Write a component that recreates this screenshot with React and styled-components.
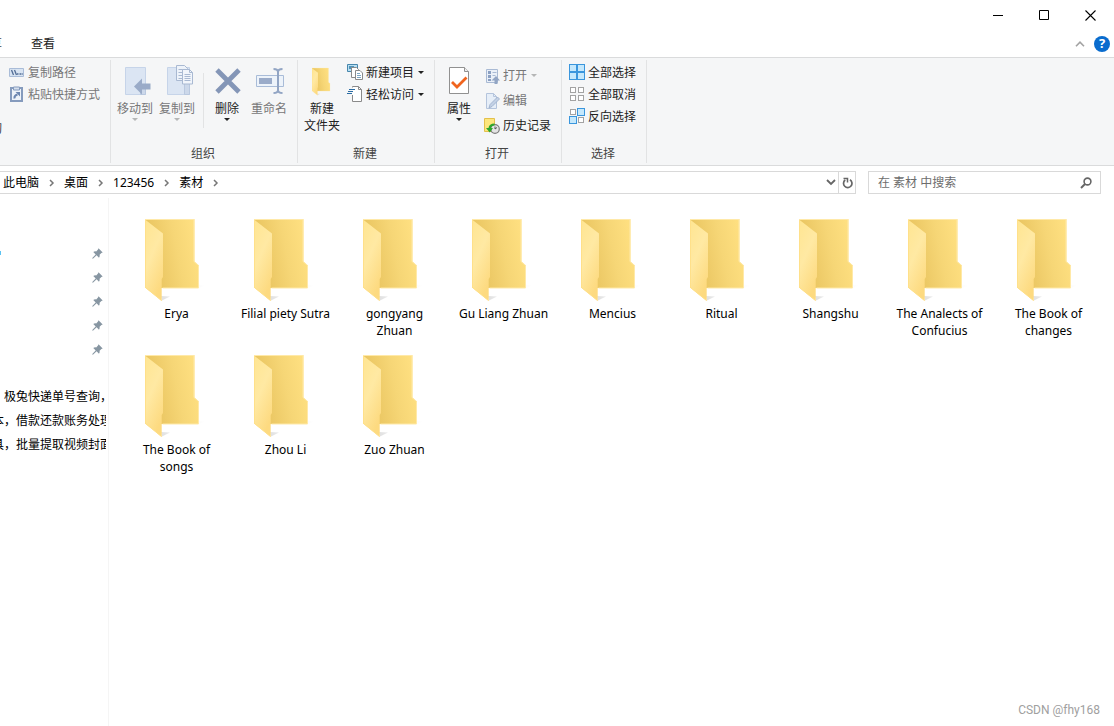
import React, { useState } from "react";
import styled, { createGlobalStyle } from "styled-components";

const folders = [
    "Erya",
    "Filial piety Sutra",
    "gongyang Zhuan",
    "Gu Liang Zhuan",
    "Mencius",
    "Ritual",
    "Shangshu",
    "The Analects of Confucius",
    "The Book of changes",
    "The Book of songs",
    "Zhou Li",
    "Zuo Zhuan",
];

const crumbs = ["此电脑", "桌面", "123456", "素材"];

const pinned = [1, 2, 3, 4, 5];

const recent = ["，极兔快递单号查询，", "本，借款还款账务处理", "具，批量提取视频封面"];

const App = () => {
    const [search, setSearch] = useState("");
    return (
        <>
            <GlobalStyle />
            <Window>
                <TitleBar>
                    <WindowButton aria-label="最小化">
                        <svg width="11" height="11"><path d="M0 5.5h10" stroke="#000" /></svg>
                    </WindowButton>
                    <WindowButton aria-label="最大化">
                        <svg width="11" height="11"><path d="M.5 .5h9v9h-9z" fill="none" stroke="#000" /></svg>
                    </WindowButton>
                    <WindowButton aria-label="关闭">
                        <svg width="11" height="11"><path d="M.5 .5l10 10M10.5 .5l-10 10" stroke="#000" strokeWidth="1.1" /></svg>
                    </WindowButton>
                </TitleBar>
                <TabBar>
                    <CutText $width={2}>共享</CutText>
                    <Tab>查看</Tab>
                    <TabTools>
                        <PlainButton aria-label="折叠功能区">
                            <svg width="10" height="6"><path d="M1 5.2l4-4 4 4" fill="none" stroke="#a3a3a3" strokeWidth="1.6" /></svg>
                        </PlainButton>
                        <HelpButton>?</HelpButton>
                    </TabTools>
                </TabBar>

                <Ribbon>
                    <Group $width={110}>
                        <Tools>
                            <ClipRail>
                                <CutText $width={2}>剪切</CutText>
                            </ClipRail>
                            <Column>
                                <Small icon={<CopyPathIcon />} text="复制路径" disabled />
                                <Small icon={<PasteLinkIcon />} text="粘贴快捷方式" disabled />
                            </Column>
                        </Tools>
                    </Group>
                    <Group $width={186}>
                        <Tools>
                            <Big icon={<MoveIcon />} text="移动到" caret disabled />
                            <Big icon={<CopyIcon />} text="复制到" caret disabled />
                            <Divider />
                            <Big icon={<DeleteIcon />} text="删除" caret />
                            <Big icon={<RenameIcon />} text="重命名" disabled />
                        </Tools>
                        <GroupName>组织</GroupName>
                    </Group>
                    <Group $width={136}>
                        <Tools>
                            <Big icon={<FolderIcon width="21" height="32" />} text={<>新建<br />文件夹</>} />
                            <Column>
                                <Small icon={<NewItemIcon />} text="新建项目" caret />
                                <Small icon={<AccessIcon />} text="轻松访问" caret />
                            </Column>
                        </Tools>
                        <GroupName>新建</GroupName>
                    </Group>
                    <Group $width={126}>
                        <Tools>
                            <Big icon={<PropertiesIcon />} text="属性" caret />
                            <Column $loose>
                                <Small icon={<OpenIcon />} text="打开" caret disabled />
                                <Small icon={<EditIcon />} text="编辑" disabled />
                                <Small icon={<HistoryIcon />} text="历史记录" />
                            </Column>
                        </Tools>
                        <GroupName>打开</GroupName>
                    </Group>
                    <Group $width={84}>
                        <Tools>
                            <Column>
                                <Small icon={<SquaresIcon on={[1, 1, 1, 1]} />} text="全部选择" />
                                <Small icon={<SquaresIcon on={[0, 0, 0, 0]} />} text="全部取消" />
                                <Small icon={<SquaresIcon on={[0, 1, 1, 0]} />} text="反向选择" />
                            </Column>
                        </Tools>
                        <GroupName>选择</GroupName>
                    </Group>
                </Ribbon>

                <AddressRow>
                    <Address>
                        {crumbs.map((name) => (
                            <React.Fragment key={name}>
                                <Crumb href="#">{name}</Crumb>
                                <CrumbArrow>
                                    <svg width="6" height="8"><path d="M1 1l3 3-3 3" fill="none" stroke="#777" strokeWidth="1.5" /></svg>
                                </CrumbArrow>
                            </React.Fragment>
                        ))}
                        <AddressTools>
                            <PlainButton aria-label="以前的位置">
                                <svg width="10" height="7"><path d="M1 1l4 4 4-4" fill="none" stroke="#666" strokeWidth="1.8" /></svg>
                            </PlainButton>
                            <Refresh aria-label="刷新">
                                <svg width="11" height="12">
                                    <path d="M8 2.8A4.200 4.200 0 1 1 3.200 3" fill="none" stroke="#666" strokeWidth="1.7" />
                                    <path d="M1.500 1.500h4v4" fill="none" stroke="#666" strokeWidth="1.5" />
                                </svg>
                            </Refresh>
                        </AddressTools>
                    </Address>
                    <SearchBox>
                        <input
                            aria-label="搜索"
                            placeholder="在 素材 中搜索"
                            value={search}
                            onChange={(e) => setSearch(e.target.value)}
                        />
                        <svg width="12" height="12">
                            <circle cx="7.5" cy="4.5" r="3.4" fill="none" stroke="#666" strokeWidth="1.6" />
                            <path d="M5 7L1 11" stroke="#666" strokeWidth="2" />
                        </svg>
                    </SearchBox>
                </AddressRow>

                <Body>
                    <Sidebar>
                        {pinned.map((id) => (
                            <PinRow key={id}>
                                {id === 1 && <CutMark />}
                                <PinIcon />
                            </PinRow>
                        ))}
                        <Recent>
                            {recent.map((name) => (
                                <RecentLink href="#" key={name}>{name}</RecentLink>
                            ))}
                        </Recent>
                    </Sidebar>
                    <Files>
                        {folders.map((name) => (
                            <File key={name}>
                                <FolderIcon width="63" height="84" />
                                <span>{name}</span>
                            </File>
                        ))}
                    </Files>
                </Body>
                <Watermark>CSDN @fhy168</Watermark>
            </Window>
        </>
    );
};

const Caret = () => (
    <svg className="caret" width="6" height="3"><path d="M0 0h6L3 3z" fill="currentColor" /></svg>
);

const Big = ({ icon, text, caret, disabled }) => (
    <BigButton disabled={disabled}>
        <BigIcon>{icon}</BigIcon>
        <span>{text}</span>
        {caret && <Caret />}
    </BigButton>
);

const Small = ({ icon, text, caret, disabled }) => (
    <SmallButton disabled={disabled}>
        {icon}
        <span>{text}</span>
        {caret && <Caret />}
    </SmallButton>
);

const FolderIcon = ({ width, height }) => (
    <svg width={width} height={height} viewBox="0 0 63 84" preserveAspectRatio="xMidYMax meet">
        <defs>
            <linearGradient id="back" x1="0.2" x2="1" y1="0.6" y2="0.4">
                <stop offset="0" stopColor="#ebc763" />
                <stop offset="0.5" stopColor="#f6d676" />
                <stop offset="1" stopColor="#ffe081" />
            </linearGradient>
            <linearGradient id="front" x1="0" x2="0.5" y1="0" y2="1">
                <stop offset="0" stopColor="#ffe591" />
                <stop offset="0.5" stopColor="#ffe9a3" />
                <stop offset="1" stopColor="#fdda80" />
            </linearGradient>
            <linearGradient id="shade" x1="0" x2="1">
                <stop offset="0" stopColor="#ccc" stopOpacity="0.6" />
                <stop offset="1" stopColor="#e4e4e4" stopOpacity="0" />
            </linearGradient>
        </defs>
        <path d="M53 65.500l8 1-7 2.5h-2zM16 77l9 .5-8 4z" fill="url(#shade)" />
        <path d="M0 0h49.500v42.500l4.500 4v22.500h-54z" fill="url(#back)" />
        <path d="M0 .5h49v42l4.500 4v22.500h-36" fill="none" stroke="#ffe9a8" />
        <path d="M0 .5l18 14v43.500l-1.300 2v22L0 68.500z" fill="url(#front)" />
        <path d="M.5 1v67.500l16 13" fill="none" stroke="#ffe08a" />
    </svg>
);

const CopyPathIcon = () => (
    <svg width="16" height="16">
        <path d="M.5 4.500h14v8h-14z" fill="#d8e4f2" stroke="#a9bcd8" />
        <path d="M2.500 6l2 5M5.500 6l2 5" stroke="#526d96" strokeWidth="1.3" />
        <path d="M8 10h1.500M10.500 10h1.500M12.500 10h1.200" stroke="#526d96" strokeWidth="1.5" />
    </svg>
);

const PasteLinkIcon = () => (
    <svg width="16" height="16">
        <path d="M2 2h11v13h-11z" fill="#eef3f9" stroke="#859bbd" strokeWidth="2" />
        <path d="M4.500 1h6v3h-6z" fill="#d5dfed" stroke="#859bbd" />
        <path d="M5.500 12.500q-.5-3 3-4" fill="none" stroke="#6c86b0" strokeWidth="2" />
        <path d="M6.500 6h4.500v4.500z" fill="#6c86b0" />
    </svg>
);

const MoveIcon = () => (
    <svg width="32" height="32" viewBox="-5 -1 32 32">
        <path d="M1.500 2.500h20v27h-20z" fill="#dbe5f3" stroke="#c6d4e9" />
        <path d="M16.500 22v7.500h5V22" fill="#ccd8ea" stroke="#b9c8df" />
        <path d="M10 21.500l8-8v5H26.500v6h-8.500v5z" fill="#9aabc8" />
    </svg>
);

const CopyIcon = () => (
    <svg width="32" height="32" viewBox="-5 -1 32 32">
        <path d="M1.500 2.500h22v27h-22z" fill="#dbe5f3" stroke="#c6d4e9" />
        <path d="M18.500 19v10.500h5V19" fill="#ccd8ea" stroke="#b9c8df" />
        <path d="M10.500 .5h8l3 3v12h-11z" fill="#eef3fa" stroke="#a9b9d2" />
        <path d="M12.500 4.500h5M12.500 7.500h5M12.500 10.500h5M12.500 13.500h5" stroke="#a9b9d2" />
        <path d="M16.500 4.500h7l3 3v11.500h-10z" fill="#f1f5fb" stroke="#a9b9d2" />
        <path d="M23.500 4.500v3h3M18.500 9.500h6M18.500 11.500h6M18.500 13.500h6M18.500 15.500h6" fill="none" stroke="#a9b9d2" />
    </svg>
);

const DeleteIcon = () => (
    <svg width="30" height="30" viewBox="-2 -2 30 30">
        <path d="M3 3l22 22M25 3L3 25" stroke="#8496b7" strokeWidth="4.800" />
    </svg>
);

const RenameIcon = () => (
    <svg width="30" height="30" viewBox="-2 -2 30 30">
        <path d="M.5 8.500h27v11h-27z" fill="#edf3fa" stroke="#a9bcd8" />
        <path d="M3 11h13v6H3z" fill="#9aabc9" />
        <path d="M17.500 2q4.500 0 4.500 3v18q0 3-4.500 3M26.500 2q-4.500 0-4.500 3v18q0 3 4.500 3" fill="none" stroke="#92a5c4" strokeWidth="2" />
    </svg>
);

const NewItemIcon = () => (
    <svg width="16" height="16">
        <path d="M.5 .5h10v7h-10z" fill="#b9dff2" stroke="#4787ad" />
        <path d="M2 2h5v3H2z" fill="#4f93b8" />
        <path d="M4.500 3.500h5l2 2v8h-7z" fill="#fff" stroke="#8a8a8a" />
        <path d="M8.500 6.500h4.500l2.500 2.500v6.500h-7z" fill="#fff" stroke="#8a8a8a" />
        <path d="M10 9.500h3M10 11.500h4M10 13.500h4" stroke="#7ca6c4" />
    </svg>
);

const AccessIcon = () => (
    <svg width="16" height="16">
        <path d="M5.500 .5h6l3 3v12h-9z" fill="#fff" />
        <path d="M5.500 9v6.500h9v-12l-3-3h-6v1M11.500 .5v3h3" fill="none" stroke="#8a8a8a" />
        <path d="M2 3.500h6M1 5.500h5M0 7.500h5" stroke="#2b6ca3" strokeWidth="1.200" />
    </svg>
);

const PropertiesIcon = () => (
    <svg width="22" height="30">
        <path d="M1.500 2.500h15l4 4v22h-19z" fill="#fff" stroke="#919191" />
        <path d="M16.500 2.500v4h4" fill="#eee" stroke="#919191" />
        <path d="M4 17l5 5L18.500 12.500" fill="none" stroke="#f0641e" strokeWidth="2.800" />
    </svg>
);

const OpenIcon = () => (
    <svg width="16" height="16">
        <path d="M2.500 1.500h11v13h-11z" fill="#eaf0f8" stroke="#a9bad4" />
        <path d="M4 3h3v3H4zM4 7h3v3H4zM4 11h3v2H4z" fill="#8ba0c2" />
        <path d="M8.500 4.500h4M8.500 7.500h3" stroke="#a9bad4" />
        <path d="M7.500 12.500L12 8l4 4.500h-2.500V16h-3v-3.500z" fill="#92a5c4" />
    </svg>
);

const EditIcon = () => (
    <svg width="16" height="16">
        <path d="M2.500 .5h7l3 3v12h-10z" fill="#e6eef8" stroke="#b4c4dc" />
        <path d="M9.500 .5v3h3" fill="none" stroke="#b4c4dc" />
        <path d="M5 15l1-3.500L13.500 4l2 2-7.500 7.500z" fill="#c3d1e5" stroke="#98abc9" strokeWidth=".8" />
    </svg>
);

const HistoryIcon = () => (
    <svg width="16" height="16">
        <path d="M.5 .5h10v13h-10z" fill="#fde67c" stroke="#e3c04c" />
        <circle cx="11" cy="11" r="4.300" fill="#e4e4e4" stroke="#7d7d7d" strokeWidth="1.200" />
        <path d="M11 8.500v2.500l2-1.500" fill="none" stroke="#555" />
        <path d="M10.500 5.500q-5.500 0-6 4.500H2l3.800 4.500L9 10H7q.5-2.500 3.500-2.500z" fill="#2ea62c" />
    </svg>
);

// four little squares, `on` says which of them are picked
const SquaresIcon = ({ on }) => (
    <svg width="16" height="16">
        {on.map((picked, i) => {
            const x = (i % 2) * 8;
            const y = i > 1 ? 8 : 0;
            return picked ? (
                <rect key={i} x={x + 0.5} y={y + 0.5} width="7" height="7" fill="#c5e8fc" stroke="#3a96dd" />
            ) : (
                <rect key={i} x={x + 1.5} y={y + 1.5} width="5" height="5" fill="#fff" stroke="#a3a3a3" />
            );
        })}
    </svg>
);

const PinIcon = () => (
    <svg width="11" height="11">
        <path d="M6.500 .3L10.700 4.500 9.400 5 7.600 6.800Q8 8.500 7 9.700L4.600 7.300 1.200 10.500.3 10.700.5 9.800 3.700 6.400 1.300 4Q2.500 3 4.200 3.400L6 1.600z" fill="#8796a2" />
    </svg>
);

const GlobalStyle = createGlobalStyle`
    *{
        box-sizing: border-box;
    }
    body{
        margin: 0;
        background: white;
    }
    body, button, input{
        font-family: "Noto Sans", "Noto Sans CJK SC", sans-serif;
        font-size: 12px;
        line-height: 17px;
        color: #000;
    }
    svg{
        display: block;
        flex: none;
    }
`

const Window = styled.div`
    min-height: 100vh;
    display: flex;
    flex-direction: column;
    position: relative;
    overflow: hidden;
`

const PlainButton = styled.button`
    border: none;
    background: none;
    padding: 0;
    display: flex;
    align-items: center;
    justify-content: center;
`

const TitleBar = styled.header`
    display: flex;
    justify-content: flex-end;
    height: 30px;
    padding-right: 1px;
`

const WindowButton = styled(PlainButton)`
    width: 46px;
`

const TabBar = styled.nav`
    display: flex;
    align-items: center;
    height: 28px;
    border-bottom: 1px solid #dadbdc;
`

const CutText = styled.span`
    display: flex;
    justify-content: flex-end;
    width: ${(props) => props.$width}px;
    overflow: hidden;
    white-space: nowrap;
    color: #444;
`

const Tab = styled(PlainButton)`
    margin-left: 29px;
    color: #222;
`

const TabTools = styled.div`
    display: flex;
    align-items: center;
    gap: 9px;
    margin-left: auto;
    padding-right: 4px;
`

const HelpButton = styled(PlainButton)`
    width: 16px;
    height: 16px;
    border-radius: 50%;
    background: #0a6cce;
    color: white;
    font-size: 13px;
    font-weight: 700;
`

const Ribbon = styled.section`
    display: flex;
    padding: 2px 0;
    background: #f5f6f7;
    border-bottom: 1px solid #dadbdc;
`

const Group = styled.div`
    box-sizing: content-box;
    flex: 0 0 ${(props) => props.$width}px;
    display: flex;
    flex-direction: column;
    height: 103px;
    border-right: 1px solid #e2e3e4;
`

const Tools = styled.div`
    display: flex;
    flex: 1;
    padding-left: 3px;
`

const ClipRail = styled.div`
    width: 5px;
    margin-left: -3px;
    padding-top: 60px;
`

const GroupName = styled.div`
    padding: 0 2px 1px 0;
    text-align: center;
    color: #444;
`

const Divider = styled.div`
    width: 1px;
    margin: 13px 2px 17px 5px;
    background: #e2e3e4;
`

const BigButton = styled(PlainButton)`
    flex: 0 0 42px;
    flex-direction: column;
    justify-content: flex-start;
    padding: 0 3px;
    color: ${(props) => (props.disabled ? "#777" : "#222")};
    .caret{
        margin-top: 1px;
        opacity: ${(props) => (props.disabled ? 0.5 : 1)};
    }
`

const BigIcon = styled.span`
    display: flex;
    align-items: center;
    justify-content: center;
    height: 40px;
`

const Column = styled.div`
    display: grid;
    grid-auto-rows: ${(props) => (props.$loose ? 25 : 22)}px;
    align-content: start;
    padding: ${(props) => (props.$loose ? 3 : 1)}px 0 0 4px;
`

const SmallButton = styled(PlainButton)`
    justify-content: flex-start;
    gap: 3px;
    white-space: nowrap;
    color: ${(props) => (props.disabled ? "#777" : "#222")};
    .caret{
        margin-left: 1px;
        opacity: ${(props) => (props.disabled ? 0.5 : 1)};
    }
`

const AddressRow = styled.div`
    display: flex;
    gap: 12px;
    padding: 5px 13px 4px 0;
`

const Address = styled.div`
    flex: 1;
    display: flex;
    align-items: center;
    height: 23px;
    padding-left: 3px;
    border: 1px solid #d9d9d9;
    border-left: none;
`

const Crumb = styled.a`
    color: #000;
    text-decoration: none;
`

const CrumbArrow = styled.span`
    display: flex;
    justify-content: center;
    width: 25px;
`

const AddressTools = styled.div`
    display: flex;
    align-self: stretch;
    gap: 2px;
    margin-left: auto;
`

const Refresh = styled(PlainButton)`
    width: 17px;
    border-left: 1px solid #d9d9d9;
`

const SearchBox = styled.div`
    flex: 0 0 233px;
    display: flex;
    align-items: center;
    height: 23px;
    padding: 0 8px 0 9px;
    border: 1px solid #d9d9d9;
    input{
        flex: 1;
        min-width: 0;
        border: none;
        outline: none;
        padding: 0;
        background: none;
    }
    input::placeholder{
        color: #6d6d6d;
        opacity: 1;
    }
`

const Body = styled.main`
    flex: 1;
    display: flex;
`

const Sidebar = styled.aside`
    flex: 0 0 109px;
    min-width: 0;
    padding: 43px 2px 0 0;
    border-right: 1px solid #f5f5f5;
`

const PinRow = styled.div`
    display: flex;
    align-items: center;
    justify-content: flex-end;
    height: 24px;
    padding-right: 3px;
`

const CutMark = styled.span`
    width: 1px;
    height: 4px;
    margin-right: auto;
    background: #5cc3f2;
`

const Recent = styled.div`
    margin-top: 24px;
    overflow: hidden;
`

const RecentLink = styled.a`
    display: block;
    margin-left: -8px;
    line-height: 24px;
    white-space: nowrap;
    color: #000;
    text-decoration: none;
`

const Files = styled.div`
    flex: 1;
    display: grid;
    grid-template-columns: repeat(auto-fill, 109px);
    grid-auto-rows: 136px;
    align-content: start;
    padding: 21px 0 0 13px;
`

const File = styled(PlainButton)`
    flex-direction: column;
    justify-content: flex-start;
    padding: 0 8px;
    span{
        margin-top: 2px;
    }
`

const Watermark = styled.div`
    position: absolute;
    right: 14px;
    bottom: 7px;
    color: #a0a0a0;
    font-family: Roboto, sans-serif;
`

export default App
